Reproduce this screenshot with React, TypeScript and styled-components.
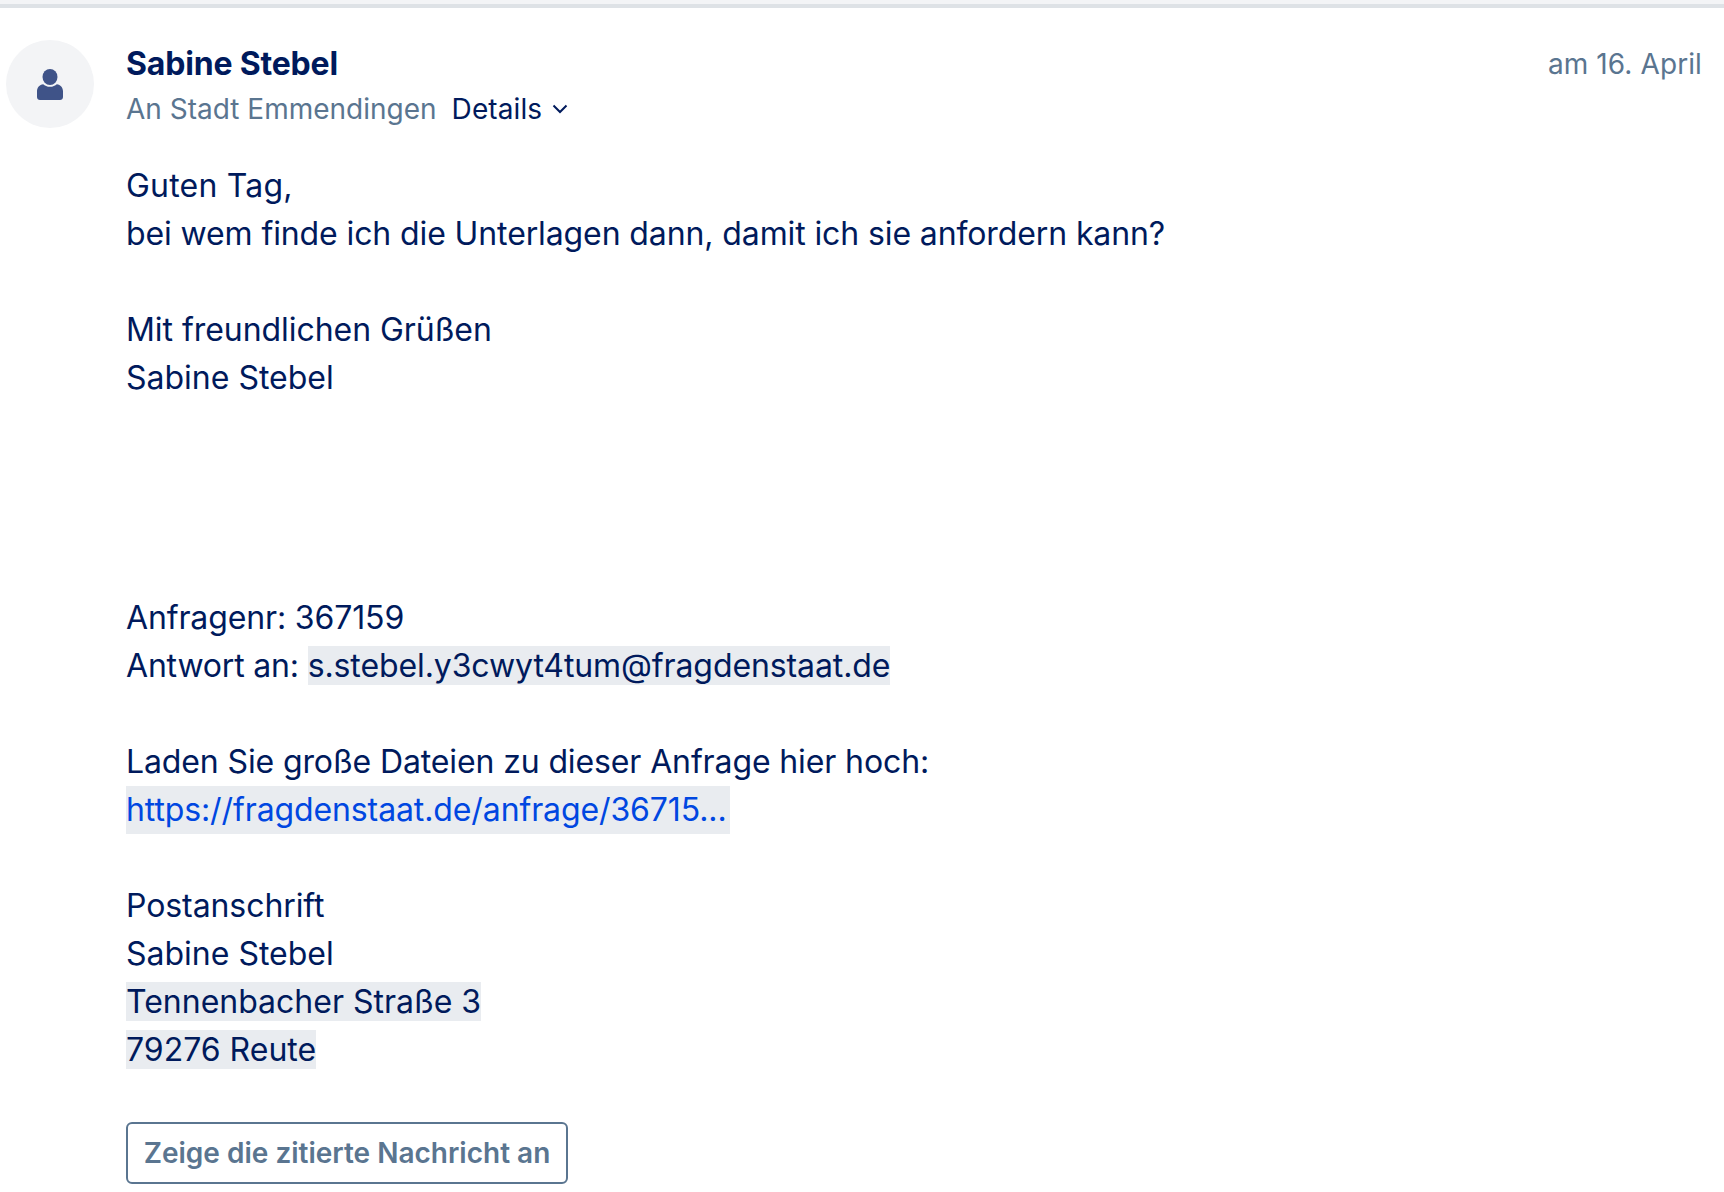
import styled, { createGlobalStyle } from "styled-components";

const GlobalStyle = createGlobalStyle`
  html, body {
    margin: 0;
    padding: 0;
    background: #fff;
  }
  body {
    font-family: Inter, "Liberation Sans", sans-serif;
    font-size: 32px;
    line-height: 48px;
    color: #001a5c;
  }
`;

const Page = styled.div`
  height: 1192px;
  overflow: hidden;
  border-top: 4px solid #f3f4f6;
`;

const Message = styled.article`
  border-top: 4px solid #dee2e6;
  padding: 32px 22px 0 6px;
  display: grid;
  grid-template-columns: 88px 1fr;
  column-gap: 32px;
`;

const Avatar = styled.div`
  width: 88px;
  height: 88px;
  border-radius: 50%;
  background: #f3f4f6;
  display: flex;
  align-items: center;
  justify-content: center;
`;

const Header = styled.header`
  display: flex;
  justify-content: space-between;
  margin-bottom: 31px;
`;

const Name = styled.div`
  font-weight: 700;
  letter-spacing: -0.18px;
`;

const Recipient = styled.div`
  display: flex;
  align-items: center;
  font-size: 28px;
  line-height: 44px;
  margin-top: -1px;
  color: #5a7590;
`;

const Details = styled.button`
  display: inline-flex;
  align-items: center;
  gap: 10px;
  margin-left: 15px;
  padding: 0;
  border: 0;
  background: none;
  font: inherit;
  letter-spacing: 0.1px;
  color: #001a5c;
`;

const Date = styled.div`
  font-size: 28px;
  letter-spacing: 0.1px;
  color: #5a7590;
`;

const Body = styled.div`
  white-space: pre-wrap;
`;

const Line = styled.span<{ $spacing?: number }>`
  letter-spacing: ${(p) => p.$spacing ?? 0}px;
`;

const Redacted = styled(Line)`
  background: #e9ecf0;
`;

const LinkBlock = styled.a`
  display: inline-block;
  background: #e9ecf0;
  padding-right: 3px;
  letter-spacing: -0.11px;
  color: #0047e1;
  text-decoration: none;
`;

const QuoteButton = styled.button`
  display: block;
  box-sizing: border-box;
  width: 442px;
  height: 62px;
  margin-top: 48px;
  padding: 0;
  border: 2px solid #5a7590;
  border-radius: 6px;
  background: #fff;
  font-family: inherit;
  font-size: 28px;
  font-weight: 600;
  color: #5a7590;
`;

function UserIcon() {
  return (
    <svg width="26" height="31" viewBox="0 0 26 31" fill="#3f5388">
      <ellipse cx="13" cy="8" rx="7.5" ry="8" />
      <path d="M6.200 15.200c1.500 1.500 4 2.600 6.800 2.600s5.300-1.100 6.800-2.600c3.700.5 6.200 3.300 6.200 7v5.800c0 1.700-1.300 3-3 3H3c-1.700 0-3-1.300-3-3v-5.800c0-3.700 2.500-6.500 6.200-7z" />
    </svg>
  );
}

function Chevron() {
  return (
    <svg width="16" height="10" viewBox="0 0 16 10" fill="none" stroke="#001a5c" strokeWidth="2">
      <path d="M1.500 1.500 8 8l6.500-6.500" />
    </svg>
  );
}

export default function App() {
  return (
    <Page>
      <GlobalStyle />
      <Message>
        <Avatar>
          <UserIcon />
        </Avatar>
        <div>
          <Header>
            <div>
              <Name>Sabine Stebel</Name>
              <Recipient>
                An Stadt Emmendingen
                <Details>
                  Details
                  <Chevron />
                </Details>
              </Recipient>
            </div>
            <Date>am 16. April</Date>
          </Header>
          <Body>
            <Line $spacing={0.2}>Guten Tag,</Line>
            {"\n"}
            <Line $spacing={-0.11}>bei wem finde ich die Unterlagen dann, damit ich sie anfordern kann?</Line>
            {"\n\n"}
            <Line $spacing={-0.05}>Mit freundlichen Grüßen</Line>
            {"\nSabine Stebel\n\n\n\n\n"}
            <Line $spacing={-0.13}>Anfragenr: 367159</Line>
            {"\n"}
            <Line $spacing={-0.18}>{"Antwort an: "}</Line>
            <Redacted $spacing={-0.1}>s.stebel.y3cwyt4tum@fragdenstaat.de</Redacted>
            {"\n\n"}
            <Line $spacing={-0.12}>Laden Sie große Dateien zu dieser Anfrage hier hoch:</Line>
            {"\n"}
            <LinkBlock href="#">https://fragdenstaat.de/anfrage/36715...</LinkBlock>
            {"\n\n"}
            <Line $spacing={-0.08}>Postanschrift</Line>
            {"\nSabine Stebel\n"}
            <Redacted>Tennenbacher Straße 3</Redacted>
            {"\n"}
            <Redacted>79276 Reute</Redacted>
          </Body>
          <QuoteButton>Zeige die zitierte Nachricht an</QuoteButton>
        </div>
      </Message>
    </Page>
  );
}
